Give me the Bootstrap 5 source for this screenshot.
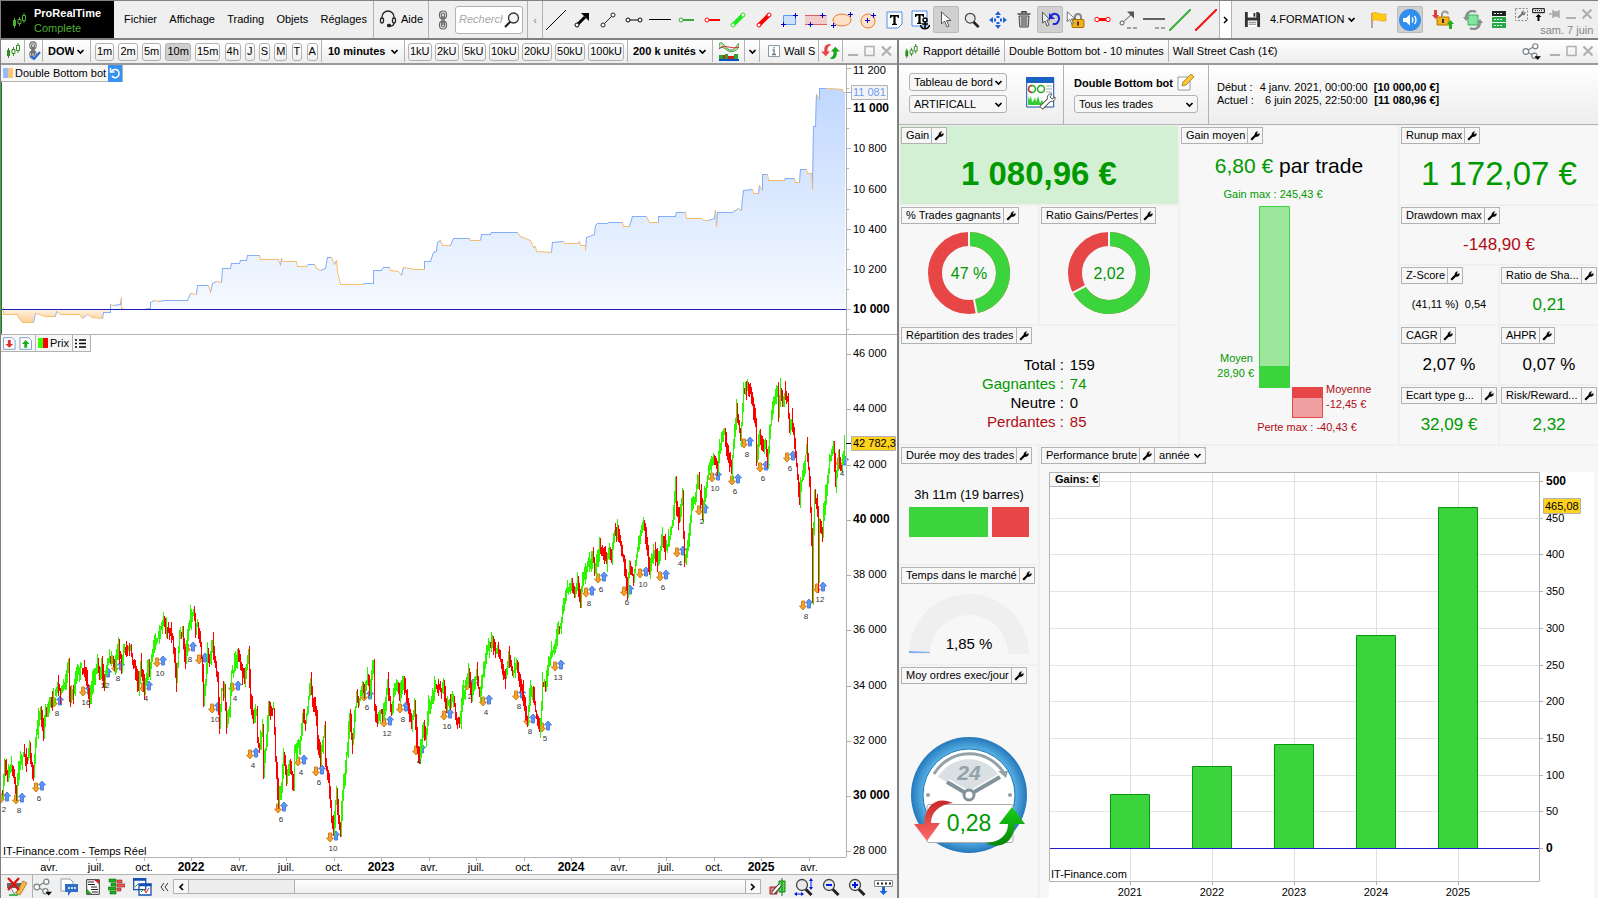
<!DOCTYPE html>
<html lang="fr">
<head>
<meta charset="utf-8">
<meta name="viewport" content="width=device-width, initial-scale=1">
<title>ProRealTime Complete</title>
<link href="https://cdn.jsdelivr.net/npm/bootstrap@5.3.0/dist/css/bootstrap.min.css" rel="stylesheet">
<style>
  :root { --edge:#808080; --line:#b2b2b2; --pos:#009900; --neg:#b00c14; --bar:#3cd43c; --loss:#e64646; }
  body { font-family:"Liberation Sans",Arial,sans-serif; font-size:11px; line-height:14px; color:#000; background:#f0f0f0; }
  svg { display:block; flex:none; }
  svg text { font-family:"Liberation Sans",Arial,sans-serif; font-size:11px; }
  button { border:0; padding:0; background:none; color:inherit; }
  a { color:inherit; text-decoration:none; }
  .topbar { height:40px; border-top:1px solid var(--edge); border-left:1px solid var(--edge); border-bottom:2px solid var(--edge); background:#efefef; }
  .brand-box { width:113px; background:#000; color:#fff; padding:2px 0 0 11px; gap:8px; }
  .brand-box small { color:#4fae32; font-size:11px; }
  .seg { border-right:1px solid var(--line); }
  .menu-seg { width:260px; padding:0 6px 2px 10px; }
  .w15 { width:15px; } .w12 { width:12px; } .w18 { width:18px; } .w24 { width:24px; } .w32 { width:32px; } .w48 { width:48px; }
  .help-seg { width:55px; padding-bottom:2px; } .search-seg { width:99px; }
  .search-box { width:68px; height:28px; border:1px solid var(--line); border-radius:3px; padding:0 19px 2px 3px; font-size:11px; font-style:italic; background:#fff; }
  .search-box::placeholder { color:#a8a8a8; opacity:1; }
  .search-ico { position:absolute; right:3px; top:6px; }
  .tool { width:26px; height:27px; display:flex; align-items:center; justify-content:center; flex:none; }
  .tool.active { background:#d0d0d0; border:1px solid #bbb; border-radius:2px; }
  .muted { color:#858585; }
  .sys { padding-top:4px; }
  .work { display:grid; grid-template-columns:minmax(0,899fr) minmax(0,699fr); }
  .pane-left { border-left:1px solid var(--edge); border-right:2px solid var(--edge); background:#fff; }
  .titlebar { height:25px; padding-bottom:1px; border-bottom:2px solid #999; background:linear-gradient(#fff,#ededed); }
  .tf { height:18px; border:1px solid var(--line); border-radius:3px; padding:0 1px 1px; background:linear-gradient(#fff,#efefef); line-height:14px; }
  .tf.active { background:#cfcfcf; }
  .tf-seg { width:231px; padding:1px 3px 0 4px; } .unit-seg { width:223px; padding:1px 3px 0; }
  .form-select.pick { font-size:11px; line-height:14px; color:#000; padding:0 12px 1px 4px; height:18px; border:1px solid var(--line); border-radius:3px; background-color:#f7f7f7; background-size:9px 9px; background-position:right 3px center;
    background-image:url("data:image/svg+xml,%3csvg xmlns='http://www.w3.org/2000/svg' viewBox='0 0 9 9'%3e%3cpath d='M1.5 3l3 3 3-3' fill='none' stroke='%23000' stroke-width='1.7'/%3e%3c/svg%3e"); }
  .form-select.plain { border:0; background-color:transparent; padding-left:5px; padding-right:16px; background-position:right 5px center; }
  .form-select.roomy { padding-left:6px; padding-right:18px; }
  .form-select.strong { font-weight:700; }
  .tag { height:17px; border:1px solid var(--line); border-top:0; border-left:0; background:#f7f7f7; padding:0 4px 0 2px; gap:3px; }
  .tag.tight { padding-right:3px; gap:2px; }
  .chart-tag { position:absolute; left:0; top:0; z-index:1; }
  .sw { display:inline-block; width:10px; height:10px; }
  .sw-bot { background:linear-gradient(90deg,#96b9ff 50%,#fcc478 50%); }
  .sw-price { background:linear-gradient(90deg,#3bff00 50%,#f00 50%); }
  .reset { width:14px; height:17px; background:#3592f0; margin-right:-3px; display:grid; place-items:center; }
  .equity { flex:270 1 0; min-height:0; border-bottom:1px solid var(--line); }
  .price { flex:540 1 0; min-height:0; border-bottom:1px solid var(--line); }
  .fill-svg { position:absolute; inset:0; width:100%; height:100%; }
  .foot { height:23px; background:#f0f0f0; }
  .scrollbar-x { height:15px; border:1px solid var(--line); background:#ededed; }
  .scrollbar-x button { width:15px; border-right:1px solid var(--line); background:#f8f8f8; }
  .scrollbar-x button:last-child { border-right:0; border-left:1px solid var(--line); }
  .track { width:18%; } .thumb { border-left:1px solid var(--line); background:linear-gradient(#fff,#eee); }
  .report-head { height:60px; padding-bottom:0; border-bottom:1px solid var(--line); background:linear-gradient(#fff,#ededed); }
  .head-a { width:165px; padding:0 7px 3px 10px; } .head-b { width:145px; padding:0 10px 2px; }
  .head-a .pick { width:98px; }
  .stack4 { gap:4px; }
  .dates { margin-bottom:2px; }
  .dates td { padding:0; line-height:13px; } .dates td + td { padding-left:6px; }
  .tiles { padding:1px 0 0 1px; display:grid; gap:2px; grid-template-columns:minmax(0,138fr) minmax(0,138fr) minmax(0,218fr) minmax(0,98fr) minmax(0,98fr); grid-template-rows:78px 58px 58px 58px 58px 118px 98px minmax(0,1fr); }
  .tile { background:#f7f7f7; display:flex; flex-direction:column; padding:1px; min-width:0; min-height:0; }
  .tile.good { background:#d4f0d4; }
  .tile-head { display:flex; align-self:flex-start; height:17px; border:1px solid var(--line); background:#f7f7f7; line-height:15px; max-width:100%; white-space:nowrap; }
  .tile-head > span { padding:0 2px 0 4px; }
  .tile-head button { width:15px; border-left:1px solid var(--line); display:grid; place-items:center; flex:none; }
  .tile-head .pick { width:52px; height:17px; margin:-1px -1px -1px 0; border-radius:0 3px 3px 0; }
  .tile-body { flex:1; display:flex; flex-direction:column; align-items:center; justify-content:center; min-height:0; }
  .c2 { grid-column:span 2; } .r2 { grid-row:span 2; } .r5 { grid-row:span 5; } .perf { grid-column:2 / span 4; grid-row:6 / span 3; }
  .pos { color:var(--pos); } .neg { color:var(--neg); }
  .fs-xl { font-size:33px; line-height:36px; } .fs-lg { font-size:21px; line-height:24px; } .fs-md { font-size:17px; line-height:20px; } .fs-md.tile-body { padding-top:2px; } .fs-sm2 { font-size:13px; line-height:16px; }
  .split { width:100%; font-size:15px; line-height:19px; margin-bottom:2px; } .split th { width:59%; font-weight:400; text-align:right; padding:0; } .split td { padding:0 0 0 6px; }
  .donut { margin-bottom:2px; }
  .dur { width:120px; height:30px; gap:4px; } .dur .win { background:var(--bar); width:79px; } .dur .lose { background:var(--loss); flex:1; }
  .perf-plot { flex:1; margin:8px 3px -1px 8px; position:relative; background:#fff; min-height:0; }
</style>
</head>
<body class="vh-100 d-flex flex-column overflow-hidden">

<svg width="0" height="0" class="position-absolute" aria-hidden="true">
  <symbol id="candles" viewBox="0 0 14 16"><path d="M2.500 5v10M7.500 4v9M12 0v10" stroke="#2e8b1d"/><path d="M1 7h3v6H1z" fill="#2e8b1d"/><path d="M6 6.500h3v4H6zM10.500 2.500h3v5h-3z" fill="#fff" stroke="#2e8b1d"/></symbol>
  <symbol id="wrench" viewBox="0 0 10 10"><path d="M1.200 8.800L6 4" stroke="#000" stroke-width="2.200"/><path d="M5.600 5.200C4.200 3 5.400.700 7.700.700L6.600 2.200l1 1.200L9.300 2.500c.4 2-1.500 3.900-3.700 2.700z" fill="#000" stroke="#000" stroke-width=".5"/></symbol>
  <symbol id="chain" viewBox="0 0 12 20"><g fill="none" stroke="#666" stroke-width="1.200"><rect x="2.500" y="1" width="7" height="8" rx="3.500"/><rect x="4.500" y="3" width="3" height="5" rx="1.500"/><rect x="2.500" y="11" width="7" height="8" rx="3.500"/><rect x="4.500" y="12" width="3" height="5" rx="1.500"/><path d="M5 6v9M7 6v9"/></g></symbol>
  <symbol id="share" viewBox="0 0 20 18"><g fill="#fff" stroke="#7d8488" stroke-width="1.300"><path d="M4 9l10-6M4 9l10 5"/><circle cx="4" cy="9" r="3"/><circle cx="14" cy="3.500" r="2.700"/><circle cx="13" cy="13.500" r="2.700"/></g><path d="M13 14h7l-3.500 4z" fill="#000"/></symbol>
  <symbol id="lens" viewBox="0 0 18 18"><path d="M10.500 11l6 6" stroke="#222" stroke-width="3"/><circle cx="7" cy="7" r="5.500" fill="#e8e8e8" stroke="#444" stroke-width="1.300"/></symbol>
  <symbol id="win-min" viewBox="0 0 12 12"><path d="M1 10h10" stroke="#b0b0b0" stroke-width="2"/></symbol>
  <symbol id="win-max" viewBox="0 0 12 12"><path d="M1.500 1.500h9v9h-9z" fill="none" stroke="#b0b0b0" stroke-width="1.500"/></symbol>
  <symbol id="win-x" viewBox="0 0 12 12"><path d="M1.500 1.500l9 9M10.500 1.500l-9 9" stroke="#b0b0b0" stroke-width="2.200"/></symbol>
  <symbol id="swap" viewBox="0 0 20 18"><path d="M9 1C4 1 3 5 3.500 9H0l5 5 4.500-5H7C6.500 6 7 3 11 2z" fill="#e64646"/><path d="M11 17c5 0 6-4 5.500-8H20l-5-5-4.500 5H13c.5 3 0 6-4 7z" fill="#18a818"/></symbol>
  <symbol id="cursor" viewBox="0 0 12 17"><path d="M1.500 1v12l3-3 2.500 6 2-1-2.500-5.500H11z" fill="#fff" stroke="#555"/></symbol>
  <symbol id="lock" viewBox="0 0 14 15"><path d="M4 7V4a3 3 0 016 0v3" fill="none" stroke="#888" stroke-width="2"/><rect x="1" y="6.500" width="12" height="8" rx="1" fill="#f2b01e" stroke="#a87400"/><path d="M7 8.500v4" stroke="#333" stroke-width="1.800"/></symbol>
</svg>

<header class="topbar d-flex flex-shrink-0">
  <div class="brand-box d-flex align-items-center">
    <svg width="14" height="16" viewBox="0 0 14 16"><path d="M2.500 5v10M7.500 4v9M12 0v10" stroke="#4fae32"/><path d="M1 7h3v6H1z" fill="#4fae32"/><path d="M6 6.500h3v4H6zM10.500 2.500h3v5h-3z" stroke="#4fae32"/></svg>
    <div class="lh-1"><strong class="d-block pb-1">ProRealTime</strong><small class="d-block">Complete</small></div>
  </div>
  <nav class="seg menu-seg d-flex align-items-center justify-content-between" aria-label="Menu principal">
    <a href="#">Fichier</a><a href="#">Affichage</a><a href="#">Trading</a><a href="#">Objets</a><a href="#">Réglages</a>
  </nav>
  <button class="seg help-seg d-flex align-items-center justify-content-center gap-1">
    <svg width="18" height="18" viewBox="0 0 18 18" fill="none" stroke="#222" stroke-width="1.300"><path d="M3 8.500V7a6 6 0 0112 0v1.500M15 13c0 2-2 3-4 3"/><rect x="1.500" y="8" width="3" height="5" rx="1.400"/><rect x="13.500" y="8" width="3" height="5" rx="1.400"/><rect x="8.500" y="14.500" width="3" height="2" rx="1" fill="#222"/></svg>Aide</button>
  <div class="seg search-seg d-flex align-items-center justify-content-between px-1">
    <button class="ps-1" aria-label="Lier"><svg width="12" height="20"><use href="#chain"/></svg></button>
    <div class="position-relative"><input class="search-box" type="text" placeholder="Recherche" aria-label="Rechercher"><svg class="search-ico" width="16" height="16" viewBox="0 0 16 16"><path d="M6.500 9.500L1 15" stroke="#222" stroke-width="2.200"/><circle cx="9.500" cy="6" r="5" fill="#f4f4f4" stroke="#333" stroke-width="1.300"/></svg></div>
  </div>
  <button class="seg w15 muted" aria-label="Précédent">‹</button>
  <div class="d-flex align-items-center seg" role="toolbar" aria-label="Outils de dessin">
    <button class="tool" aria-label="Ligne"><svg width="22" height="22"><path d="M1 21L21 1" stroke="#000"/></svg></button>
    <button class="tool" aria-label="Flèche"><svg width="16" height="16"><path d="M4 12l7-7" stroke="#000" stroke-width="3"/><path d="M7 1h8v8z"/><circle cx="3" cy="13" r="2" fill="#fff" stroke="#000"/></svg></button>
    <button class="tool" aria-label="Segment"><svg width="16" height="16" fill="#fff" stroke="#222"><path d="M3 13L13 3"/><circle cx="3" cy="13" r="2"/><circle cx="13" cy="3" r="2"/></svg></button>
    <button class="tool" aria-label="Segment horizontal"><svg width="18" height="6" fill="#fff" stroke="#000"><path d="M3 3h12"/><circle cx="3" cy="3" r="2"/><circle cx="15" cy="3" r="2"/></svg></button>
    <button class="tool" aria-label="Horizontale"><svg width="22" height="3"><path d="M0 1.500h22" stroke="#000"/></svg></button>
    <button class="tool" aria-label="Support"><svg width="16" height="6"><path d="M5 3h11" stroke="#38a838" stroke-width="2"/><circle cx="3" cy="3" r="2" fill="#fff" stroke="#38a838"/></svg></button>
    <button class="tool" aria-label="Résistance"><svg width="16" height="6"><path d="M5 3h11" stroke="#f00" stroke-width="2"/><circle cx="3" cy="3" r="2" fill="#fff" stroke="#f00"/></svg></button>
    <button class="tool" aria-label="Segment vert"><svg width="16" height="16" fill="#fff" stroke="#1de81d"><path d="M3 13L13 3" stroke-width="4"/><circle cx="3" cy="13" r="2"/><circle cx="13" cy="3" r="2"/></svg></button>
    <button class="tool" aria-label="Segment rouge"><svg width="16" height="16" fill="#fff" stroke="#f00"><path d="M3 13L13 3" stroke-width="4"/><circle cx="3" cy="13" r="2"/><circle cx="13" cy="3" r="2"/></svg></button>
    <button class="tool" aria-label="Rectangle"><svg width="18" height="16"><path d="M2.500 3.500h12v9h-12z" fill="#cfe2fb" stroke="#5a98f0"/><path d="M0 12.500h5M2.500 10v5M12 3.500h5M14.500 1v5" stroke="#00c"/></svg></button>
    <button class="tool" aria-label="Zone"><svg width="22" height="14"><path d="M0 2.500h22v9H0z" fill="#f3cccc"/><path d="M0 2.500h22M0 11.500h22" stroke="#d86060"/><path d="M3 11.500h5M5.500 9v5M15 2.500h5M17.500 0v5" stroke="#00c"/></svg></button>
    <button class="tool" aria-label="Ellipse"><svg width="22" height="16"><ellipse cx="11" cy="8" rx="9" ry="6" fill="#fde0c8" stroke="#f07830"/><path d="M0 13.500h5M2.500 11v5M17 2.500h5M19.500 0v5" stroke="#00c"/></svg></button>
    <button class="tool" aria-label="Cercle"><svg width="18" height="18"><circle cx="9" cy="10" r="7" fill="#fde0c8" stroke="#f07830"/><path d="M6 9.500h5M8.500 7v5M12 4.500h5M14.500 2v5" stroke="#00c"/></svg></button>
    <button class="tool" aria-label="Texte"><svg width="17" height="18" viewBox="0 0 17 18"><path d="M1 1h15v12l-4 4H1z" fill="#fff" stroke="#4a8ff0"/><path d="M4 4h9v3h-1l-1-1.500H9.600v7l1.400.5v1H6v-1l1.400-.5v-7H6L5 7H4z"/></svg></button>
    <button class="tool" aria-label="Texte ancré"><svg width="19" height="20" viewBox="0 0 19 20"><path d="M1 1h15v15H1z" fill="#fff" stroke="#4a8ff0"/><path d="M4 4h9v3h-1l-1-1.500H9.600v7l1 .5v1H6v-1l1.400-.5v-7H6L5 7H4z"/><g fill="none" stroke="#000" stroke-width="1.500"><circle cx="14" cy="10" r="2"/><path d="M14 11v8M9.500 15c1 5 8 5 9 0M11 14h6"/></g></svg></button>
    <button class="tool active" aria-label="Curseur"><svg width="12" height="17"><use href="#cursor"/></svg></button>
    <button class="tool" aria-label="Loupe"><svg width="16" height="16"><use href="#lens"/></svg></button>
    <button class="tool" aria-label="Déplacer"><svg width="18" height="18" viewBox="0 0 18 18"><path d="M9 0l3 4H6zM9 18l3-4H6zM0 9l4-3v6zM18 9l-4-3v6zM7.500 5h3v2h-3zM7.500 11h3v2h-3zM5 7.500h2v3H5zM11 7.500h2v3h-2z" fill="#1c63d8"/></svg></button>
    <button class="tool" aria-label="Supprimer"><svg width="14" height="17" viewBox="0 0 14 17" fill="none" stroke="#444"><path d="M5 2V.7h4V2M.5 3h13" stroke-width="1.600"/><path d="M2 5l.8 11h8.400L12 5z" fill="#ccc"/><path d="M5 6v9M7 6v9M9 6v9"/></svg></button>
    <button class="tool active" aria-label="Retour au curseur"><svg width="19" height="17" viewBox="0 0 19 17"><path d="M1.500 1v11l2.500-2 2 5 2-1-2-5H9z" fill="#eee" stroke="#555"/><path d="M10 4.500c4-4 9-.5 7.800 4.500-.8 3-3 4.500-6 4" fill="none" stroke="#1726d8" stroke-width="2"/><path d="M8 2v6h6z" fill="#1726d8"/></svg></button>
    <button class="tool" aria-label="Verrouiller"><svg width="20" height="18"><use href="#lock" x="5" y="2" width="14" height="15"/><use href="#cursor" width="10" height="14"/></svg></button>
    <button class="tool" aria-label="Segment rouge horizontal"><svg width="17" height="7" fill="#fff" stroke="#f00"><path d="M4 3.500h9" stroke-width="3"/><circle cx="3" cy="3.500" r="2.200"/><circle cx="14" cy="3.500" r="2.200"/></svg></button>
    <button class="tool" aria-label="Extension"><svg width="18" height="19" viewBox="0 0 18 19"><path d="M3 13L13 4" stroke="#555"/><path d="M8 1.500h7v7z" fill="#555"/><circle cx="3" cy="13" r="2" fill="#fff" stroke="#555"/><path d="M8 18h4M14 18h4" stroke="#555"/></svg></button>
    <button class="tool" aria-label="Ligne grise"><svg width="22" height="19"><path d="M0 9h22" stroke="#333" stroke-width="1.500"/><path d="M12 18h4M18 18h4" stroke="#555"/></svg></button>
    <button class="tool" aria-label="Ligne verte"><svg width="22" height="22"><path d="M0 22L22 0" stroke="#38b038" stroke-width="2"/></svg></button>
    <button class="tool" aria-label="Ligne rouge"><svg width="22" height="22"><path d="M0 22L22 0" stroke="#f01010" stroke-width="2"/></svg></button>
  </div>
  <button class="seg bg-white w12 d-grid align-items-center justify-content-center" aria-label="Suivant"><svg width="6" height="8"><path d="M1 1l3 3-3 3" fill="none" stroke="#000" stroke-width="1.500"/></svg></button>
  <button class="ms-2 ps-1" aria-label="Enregistrer"><svg width="17" height="17" viewBox="0 0 18 18"><path d="M1 1h14l2 2v14H1z" fill="#333"/><path d="M4 1h9v6H4zM4 10h10v7H4z" fill="#fff"/><path d="M10 2h2v4h-2z" fill="#333"/><path d="M5 12h8M5 14h8" stroke="#777"/></svg></button>
  <select class="form-select pick plain align-self-center ms-1 w-auto" aria-label="Espace de travail"><option>4.FORMATION</option></select>
  <div class="d-flex align-items-center flex-grow-1 justify-content-around ps-1">
    <button aria-label="Drapeau"><svg width="18" height="18" viewBox="0 0 18 18"><path d="M2 2v15" stroke="#a88" stroke-width="1.500"/><path d="M2 2c4-2 6 2 14 1v7c-8 1-9-3-14 0z" fill="#ffc918" stroke="#e0a000" stroke-width=".6"/></svg></button>
    <button class="tool active" aria-label="Son"><svg width="22" height="22" viewBox="0 0 22 22"><circle cx="11" cy="11" r="11" fill="#2f8eee"/><path d="M4 9h3l4-3.500v11L7 13H4z" fill="#fff"/><path d="M13 8.500q2 2.500 0 5M15.500 7q3 4 0 8" stroke="#fff" fill="none" stroke-width="1.300"/></svg></button>
    <button aria-label="Verrou"><svg width="22" height="19" viewBox="0 0 22 19"><path d="M10 8V5a3 3 0 016-1" stroke="#999" stroke-width="2" fill="none"/><path d="M5 7h12v8H5z" fill="#f2b01e" stroke="#b07c00"/><path d="M11 9v4" stroke="#333" stroke-width="2"/><path d="M2 0h3v5h2L3.500 9 0 5h2z" fill="#e03c3c"/><path d="M17 19h3v-5h2l-3.500-4L15 14h2z" fill="#1fae1f"/></svg></button>
    <button aria-label="Rafraîchir"><svg width="20" height="20" viewBox="0 0 20 20"><path d="M5 5h10v10H5z" fill="#82e6a0" stroke="#3ab060"/><path d="M13 2C8-1 3 3 3 8M7 18c5 3 10-1 10-6" fill="none" stroke="#8a8f8f" stroke-width="2.500"/><path d="M0 7h6.500L3 11zM13.500 13H20l-3-4z" fill="#8a8f8f"/></svg></button>
    <button aria-label="Serveur"><svg width="14" height="17" viewBox="0 0 14 17"><path d="M0 0h14v5H0z" fill="#222"/><path d="M0 6h14v5H0zM0 12h14v5H0z" fill="#28a745"/><path d="M2 2.500h8M2 8.500h8M2 14.500h8" stroke="#cfe" stroke-dasharray="2 1"/></svg></button>
    <div class="sys d-flex flex-column align-items-end gap-1">
      <div class="d-flex gap-1">
        <svg width="13" height="13" viewBox="0 0 13 13"><path d="M.5.500h12v12H.5z" fill="none" stroke="#888" stroke-dasharray="2 1.500"/><use href="#wrench" x="2" y="2" width="9" height="9" opacity=".5"/></svg>
        <svg width="13" height="13" viewBox="0 0 13 13"><path d="M.7.700h11.600v4H.7z" fill="none" stroke="#000"/><path d="M3 2.700h7" stroke="#000" stroke-dasharray="1"/><path d="M6.500 6l3 3h-2v4h-2V9h-2z"/></svg>
        <svg width="12" height="12" viewBox="0 0 12 12"><path d="M0 6h4M4 2v8M5 4h4v4H5zM10 2v8" stroke="#aaa" fill="#aaa" stroke-width="1.500"/></svg>
        <svg width="12" height="12"><use href="#win-min"/></svg><svg width="12" height="12"><use href="#win-x"/></svg>
      </div>
      <span class="muted lh-1">sam. 7 juin</span>
    </div>
  </div>
</header>

<main class="work flex-grow-1 overflow-hidden">
  <section class="pane-left d-flex flex-column" aria-label="Graphique DOW">
    <div class="titlebar d-flex flex-shrink-0">
      <div class="seg w24 d-grid align-items-center justify-content-center"><svg width="14" height="16"><use href="#candles"/></svg></div>
      <button class="seg w18 d-grid align-items-center justify-content-center" aria-label="Lier"><svg width="14" height="20"><use href="#chain" width="12" height="18"/><path d="M4 15l3 3 6-7" fill="none" stroke="#2166d8" stroke-width="2"/></svg></button>
      <div class="seg w48 d-flex align-items-center"><select class="form-select pick plain strong" aria-label="Instrument"><option>DOW</option></select></div>
      <div class="seg tf-seg d-flex align-items-center justify-content-between">
        <button class="tf">1m</button><button class="tf">2m</button><button class="tf">5m</button><button class="tf active">10m</button><button class="tf">15m</button><button class="tf">4h</button><button class="tf">J</button><button class="tf">S</button><button class="tf">M</button><button class="tf">T</button><button class="tf">A</button>
      </div>
      <div class="seg d-flex align-items-center"><select class="form-select pick plain roomy strong" aria-label="Unité de temps"><option>10 minutes</option></select></div>
      <div class="seg unit-seg d-flex align-items-center justify-content-between">
        <button class="tf">1kU</button><button class="tf">2kU</button><button class="tf">5kU</button><button class="tf">10kU</button><button class="tf">20kU</button><button class="tf">50kU</button><button class="tf">100kU</button>
      </div>
      <div class="seg d-flex align-items-center"><select class="form-select pick plain strong" aria-label="Profondeur"><option>200 k unités</option></select></div>
      <button class="seg w32 d-grid align-items-center justify-content-center" aria-label="Indicateurs"><svg width="20" height="20" viewBox="0 0 20 20"><path d="M0 3c4-5 7 7 12 6 4 0 5-4 8-7v4c-3 5-9 6-12 3-3-2-5-4-8-1z" fill="#bfe8bf" stroke="#3a9c3a"/><path d="M0 8c5-6 12 1 20-2" fill="none" stroke="#d03030"/><path d="M0 14h4v4H0zM6 13h3v5H6zM15 13h4v5h-4z" fill="#22a822"/><path d="M4 14h2v4H4zM9 15h6v3H9z" fill="#d02020"/><path d="M0 19h20" stroke="#0050d0" stroke-width="2"/></svg></button>
      <button class="seg w15 d-grid align-items-center justify-content-center" aria-label="Plus d'indicateurs"><svg width="9" height="9"><path d="M1.500 3l3 3 3-3" fill="none" stroke="#000" stroke-width="1.700"/></svg></button>
      <div class="seg d-flex align-items-center flex-grow-1 text-nowrap gap-1 ps-2">
        <svg width="12" height="12" viewBox="0 0 12 12"><path d="M.5.500h11v11H.5z" fill="#fff" stroke="#8a9aa4"/><path d="M6 2v1.500M4.500 5H6v4.500M4 9.500h4" stroke="#68808c" stroke-width="1.300" fill="none"/></svg><span>Wall S</span></div>
      <button class="seg w24 d-grid align-items-center justify-content-center" aria-label="Actualiser"><svg width="19" height="17"><use href="#swap"/></svg></button>
      <div class="d-flex align-items-center gap-1 px-1 flex-shrink-0"><svg width="12" height="12"><use href="#win-min"/></svg><svg width="13" height="12"><use href="#win-max"/></svg><svg width="13" height="12"><use href="#win-x"/></svg></div>
    </div>

    <div class="equity position-relative">
      <div class="tag tight chart-tag d-flex align-items-center text-nowrap"><span class="sw sw-bot"></span>Double Bottom bot<button class="reset" aria-label="Relancer"><svg width="12" height="12" fill="none" stroke="#fff" stroke-width="1.500"><path d="M2 5c2-4 8-3 8 1.500S5 12 3 9"/><path d="M1.500 1v4h4"/></svg></button></div>
      <svg class="fill-svg" id="equity" role="img" aria-label="Courbe de capital"></svg>
    </div>
    <div class="price position-relative">
      <div class="chart-tag d-flex">
        <div class="tag tight d-flex align-items-center"><svg width="29" height="13" viewBox="0 0 30 13"><path d="M.5.500h9l3 3v9H.5zM17.500.500h9l3 3v9h-12z" fill="#fff" stroke="#7aa0c0"/><path d="M5 3h3v4h2.500l-4 4-4-4H5z" fill="#e03030"/><path d="M22 11h3V7h2.500l-4-4-4 4H22z" fill="#20a820"/></svg></div>
        <div class="tag tight d-flex align-items-center"><span class="sw sw-price"></span>Prix</div>
        <button class="tag d-flex align-items-center" aria-label="Liste"><svg width="11" height="9"><path d="M0 1h2M0 4.500h2M0 8h2M4 1h7M4 4.500h7M4 8h7" stroke="#000" stroke-width="1.400"/></svg></button>
      </div>
      <svg class="fill-svg" id="price" role="img" aria-label="Cours du DOW"></svg>
    </div>

    <div class="foot d-flex align-items-center flex-shrink-0">
      <button class="seg w32 h-100 d-grid align-items-center justify-content-center" aria-label="Masquer"><svg width="22" height="20" viewBox="0 0 22 20"><path d="M1 6h14v5H1z" fill="#666"/><path d="M5 11l3 6 6-6" fill="none" stroke="#888"/><path d="M10 16l7-12 4 2-7 12z" fill="#f5b944" stroke="#97681a" stroke-width=".7"/><path d="M2 1l11 12M13 1L2 13" stroke="#e01010" stroke-width="2.300"/><path d="M3 18h9" stroke="#18a018" stroke-width="1.500"/></svg></button>
      <div class="d-flex align-items-center gap-2">
        <button aria-label="Partager"><svg width="19" height="18"><use href="#share"/></svg></button>
        <button aria-label="Commentaires"><svg width="18" height="18" viewBox="0 0 18 18"><path d="M1 1h9l3 3v9H1z" fill="#fff" stroke="#8aa0b0"/><path d="M5 6h13v8h-7l-3 4v-4H5z" fill="#2f6fc8"/><path d="M8 10h8" stroke="#fff" stroke-width="1.700" stroke-dasharray="2 1"/></svg></button>
        <button aria-label="Rapport"><svg width="14" height="16" viewBox="0 0 14 16"><path d="M.7.700h12.600v14.600H.7z" fill="#fff" stroke="#333"/><path d="M2 3h6M2 5.500h7M5 8h6M5 10.500h7M6 13h6" stroke="#222"/><path d="M8 1h5v4z" fill="#d02020"/><path d="M1 10v5h5z" fill="#20a820"/></svg></button>
        <button aria-label="Carnet d'ordres"><svg width="17" height="17" viewBox="0 0 17 17"><path d="M1 1h7v3H1zM3 5h5v3H3zM0 9h8v3H0zM2 13h6v3H2z" fill="#1fae1f" stroke="#0b700b" stroke-width=".6"/><path d="M9 2h5v3H9zM9 6h8v3H9zM9 10h4v3H9z" fill="#e85858" stroke="#a02020" stroke-width=".6"/></svg></button>
        <button aria-label="Graphiques liés"><svg width="19" height="18" viewBox="0 0 19 18"><path d="M.7.700h12v11H.7zM6 6h12v11H6z" fill="#fff" stroke="#1450b4" stroke-width="1.300"/><path d="M0 1.500h13M6 7h12.500" stroke="#1450b4" stroke-width="2.500"/><path d="M2 9l3-3M8 14l3-3" stroke="#18a018"/><path d="M11 11l2 4 3-5" fill="none" stroke="#e02020"/></svg></button>
        <button aria-label="Réduire"><svg width="9" height="10" fill="none" stroke="#333"><path d="M4 1L1 5l3 4M8 1L5 5l3 4"/></svg></button>
      </div>
      <div class="scrollbar-x d-flex flex-grow-1 mx-1">
        <button class="d-grid align-items-center justify-content-center" aria-label="Défiler à gauche"><svg width="6" height="8"><path d="M5 1L2 4l3 3" fill="none" stroke="#000" stroke-width="1.700"/></svg></button>
        <div class="track"></div><div class="thumb flex-grow-1"></div>
        <button class="d-grid align-items-center justify-content-center" aria-label="Défiler à droite"><svg width="6" height="8"><path d="M1 1l3 3-3 3" fill="none" stroke="#000" stroke-width="1.700"/></svg></button>
      </div>
      <div class="d-flex align-items-center gap-2 ps-1">
        <button aria-label="Style du graphique"><svg width="17" height="18" viewBox="0 0 17 18"><path d="M1 9h7v7H1z" fill="#e88080" stroke="#a02020"/><path d="M10 3h6v11h-6zM13 0v18" fill="#5ada5a" stroke="#108010"/><path d="M4 15l7-8" stroke="#222" stroke-width="4"/><path d="M4 15l7-8" stroke="#fff" stroke-width="2.400"/></svg></button>
        <button aria-label="Zoom auto"><svg width="20" height="18" viewBox="0 0 20 18"><use href="#lens" x="1" width="18" height="18"/><path d="M1 16h8M17 1v10" stroke="#0018e0"/><path d="M0 16l3-2v4zM10 16l-3-2v4zM17 0l2 3h-4zM17 12l2-3h-4z" fill="#0018e0"/></svg></button>
        <button aria-label="Zoom arrière"><svg width="18" height="18"><use href="#lens"/><path d="M4 7h6" stroke="#0018e0" stroke-width="2"/></svg></button>
        <button aria-label="Zoom avant"><svg width="18" height="18"><use href="#lens"/><path d="M4 7h6M7 4v6" stroke="#0018e0" stroke-width="2"/></svg></button>
        <button class="pe-1" aria-label="Barre"><svg width="19" height="16" viewBox="0 0 19 16"><path d="M.5 1.500h18v6H.5z" fill="#fff" stroke="#888"/><path d="M3 4.500h14" stroke="#222" stroke-width="2" stroke-dasharray="2 2"/><path d="M8 8h3v4h2.500l-4 4-4-4H8z" fill="#1c63d8"/></svg></button>
      </div>
    </div>
  </section>

  <section class="d-flex flex-column" aria-label="Rapport détaillé">
    <div class="titlebar d-flex flex-shrink-0">
      <div class="seg d-flex align-items-center gap-1 px-1"><svg width="16" height="15"><use href="#candles"/></svg><span>Rapport détaillé</span></div>
      <div class="seg d-flex align-items-center px-1">Double Bottom bot - 10 minutes</div>
      <div class="d-flex align-items-center px-1">Wall Street Cash (1€)</div>
      <div class="ms-auto d-flex align-items-center gap-1 px-1"><button class="me-1" aria-label="Partager"><svg width="19" height="17"><use href="#share"/></svg></button><svg width="12" height="12"><use href="#win-min"/></svg><svg width="13" height="12"><use href="#win-max"/></svg><svg width="12" height="12"><use href="#win-x"/></svg></div>
    </div>
    <div class="report-head d-flex flex-shrink-0">
      <div class="seg head-a d-flex align-items-center justify-content-between">
        <div class="d-flex flex-column stack4"><select class="form-select pick" aria-label="Vue"><option>Tableau de bord</option></select><select class="form-select pick" aria-label="Modèle"><option>ARTIFICALL</option></select></div>
        <button aria-label="Configurer"><svg width="30" height="33" viewBox="0 0 30 33"><path d="M.7 1h27v29H.7z" fill="#fff" stroke="#1450a8"/><path d="M0 0h28v6H0z" fill="#1a62c4"/><circle cx="6" cy="12" r="3.500" fill="none" stroke="#2a2" stroke-width="1.500"/><path d="M6 8.500A3.500 3.500 0 006 15.500" fill="none" stroke="#d33" stroke-width="1.500"/><circle cx="15" cy="12" r="3.500" fill="none" stroke="#2a2" stroke-width="1.500"/><path d="M20 9h6M20 12h6M20 15h6" stroke="#aaa"/><path d="M2 28V18l1 5 2-4 1 6 2-2 1-3 1 5 2-6 2 7 2-3 2 4 2-3 2 4v0z" fill="#3c3"/><path d="M15 31l9-9" stroke="#555" stroke-width="5"/><path d="M22 23c-2-4 1-7 4-6l-2 3 2 2 3-2c1 4-4 6-7 3z" fill="#fff" stroke="#555"/><path d="M15.500 30.500l9-9" stroke="#fff" stroke-width="3"/></svg></button>
      </div>
      <div class="seg head-b d-flex flex-column justify-content-center gap-1">
        <div class="d-flex align-items-center justify-content-between"><strong>Double Bottom bot</strong><button class="pe-1 me-1 me-lg-0" aria-label="Modifier"><svg width="17" height="17" viewBox="0 0 17 17"><path d="M1 3h12v13H1z" fill="#fff" stroke="#8aa0ac"/><path d="M5 12l1-4 8-8 3 3-8 8z" fill="#f8c838" stroke="#a07818" stroke-width=".8"/></svg></button></div>
        <select class="form-select pick" aria-label="Filtre des trades"><option>Tous les trades</option></select>
      </div>
      <table class="dates ms-2 align-self-center text-end text-nowrap"><tbody>
        <tr><td class="text-start">Début :</td><td>4 janv. 2021, 00:00:00</td><td><strong>[10 000,00 €]</strong></td></tr>
        <tr><td class="text-start">Actuel :</td><td>6 juin 2025, 22:50:00</td><td><strong>[11 080,96 €]</strong></td></tr>
      </tbody></table>
    </div>

    <div class="tiles flex-grow-1">
      <article class="tile good c2"><div class="tile-head"><span>Gain</span><button aria-label="Régler Gain"><svg width="10" height="10"><use href="#wrench"/></svg></button></div><div class="tile-body fs-xl fw-bold pos">1 080,96 €</div></article>
      <article class="tile r5"><div class="tile-head"><span>Gain moyen</span><button aria-label="Régler Gain moyen"><svg width="10" height="10"><use href="#wrench"/></svg></button></div>
        <div class="tile-body"><div class="fs-lg"><span class="pos">6,80 €</span> par trade</div>
          <svg width="216" height="252" viewBox="0 0 216 252" class="mt-1">
            <text x="92" y="16" text-anchor="middle" fill="#009900">Gain max : 245,43 €</text>
            <path d="M78.500 24.500h30v181h-30z" fill="#9be69b" stroke="#3cd43c"/><path d="M78 184h31v22H78z" fill="#3cd43c"/>
            <path d="M111.500 205.500h30v30h-30z" fill="#f0a0a0" stroke="#e64646"/><path d="M111 205h31v11h-31z" fill="#e64646"/>
            <text x="72" y="180" text-anchor="end" fill="#009900">Moyen</text><text x="73" y="195" text-anchor="end" fill="#009900">28,90 €</text>
            <text x="145" y="211" fill="#b00c14">Moyenne</text><text x="145" y="226" fill="#b00c14">-12,45 €</text><text x="126" y="249" text-anchor="middle" fill="#b00c14">Perte max : -40,43 €</text>
          </svg></div></article>
      <article class="tile c2"><div class="tile-head"><span>Runup max</span><button aria-label="Régler Runup max"><svg width="10" height="10"><use href="#wrench"/></svg></button></div><div class="tile-body fs-xl pos">1 172,07 €</div></article>
      <article class="tile r2"><div class="tile-head"><span>% Trades gagnants</span><button aria-label="Régler % Trades gagnants"><svg width="10" height="10"><use href="#wrench"/></svg></button></div><div class="tile-body"><svg class="donut" data-share="0.47" data-label="47 %" width="84" height="84" viewBox="-42 -42 84 84"></svg></div></article>
      <article class="tile r2"><div class="tile-head"><span>Ratio Gains/Pertes</span><button aria-label="Régler Ratio Gains/Pertes"><svg width="10" height="10"><use href="#wrench"/></svg></button></div><div class="tile-body"><svg class="donut" data-share="0.67" data-label="2,02" width="84" height="84" viewBox="-42 -42 84 84"></svg></div></article>
      <article class="tile c2"><div class="tile-head"><span>Drawdown max</span><button aria-label="Régler Drawdown max"><svg width="10" height="10"><use href="#wrench"/></svg></button></div><div class="tile-body fs-md neg">-148,90 €</div></article>
      <article class="tile"><div class="tile-head"><span>Z-Score</span><button aria-label="Régler Z-Score"><svg width="10" height="10"><use href="#wrench"/></svg></button></div><div class="tile-body">(41,11 %)&nbsp; 0,54</div></article>
      <article class="tile"><div class="tile-head w-100"><span class="flex-grow-1">Ratio de Sha...</span><button aria-label="Régler Ratio de Sharpe"><svg width="10" height="10"><use href="#wrench"/></svg></button></div><div class="tile-body fs-md pos">0,21</div></article>
      <article class="tile c2 r2"><div class="tile-head"><span>Répartition des trades</span><button aria-label="Régler Répartition"><svg width="10" height="10"><use href="#wrench"/></svg></button></div>
        <div class="tile-body"><table class="split"><tbody><tr><th scope="row">Total :</th><td>159</td></tr><tr class="pos"><th scope="row">Gagnantes :</th><td>74</td></tr><tr><th scope="row">Neutre :</th><td>0</td></tr><tr class="neg"><th scope="row">Perdantes :</th><td>85</td></tr></tbody></table></div></article>
      <article class="tile"><div class="tile-head"><span>CAGR</span><button aria-label="Régler CAGR"><svg width="10" height="10"><use href="#wrench"/></svg></button></div><div class="tile-body fs-md">2,07 %</div></article>
      <article class="tile"><div class="tile-head"><span>AHPR</span><button aria-label="Régler AHPR"><svg width="10" height="10"><use href="#wrench"/></svg></button></div><div class="tile-body fs-md">0,07 %</div></article>
      <article class="tile"><div class="tile-head w-100"><span class="flex-grow-1">Ecart type g...</span><button aria-label="Régler Ecart type"><svg width="10" height="10"><use href="#wrench"/></svg></button></div><div class="tile-body fs-md pos">32,09 €</div></article>
      <article class="tile"><div class="tile-head w-100"><span class="flex-grow-1">Risk/Reward...</span><button aria-label="Régler Risk/Reward"><svg width="10" height="10"><use href="#wrench"/></svg></button></div><div class="tile-body fs-md pos">2,32</div></article>
      <article class="tile"><div class="tile-head"><span>Durée moy des trades</span><button aria-label="Régler Durée"><svg width="10" height="10"><use href="#wrench"/></svg></button></div><div class="tile-body gap-1 pb-1"><span class="fs-sm2">3h 11m (19 barres)</span><div class="dur d-flex"><div class="win"></div><div class="lose"></div></div></div></article>
      <article class="tile perf"><div class="tile-head"><span>Performance brute</span><button aria-label="Régler Performance"><svg width="10" height="10"><use href="#wrench"/></svg></button><select class="form-select pick" aria-label="Période"><option>année</option></select></div>
        <div class="perf-plot"><svg class="fill-svg" id="perf" role="img" aria-label="Gains par année"></svg></div></article>
      <article class="tile"><div class="tile-head"><span>Temps dans le marché</span><button aria-label="Régler Temps dans le marché"><svg width="10" height="10"><use href="#wrench"/></svg></button></div><div class="tile-body"><svg width="120" height="60" viewBox="0 0 120 60"><path d="M0 60a60 60 0 01120 0H99a39 39 0 00-78 0z" fill="#efefef"/><path d="M0 57l21 1v1H0z" fill="#78aef5"/><text x="60" y="55" text-anchor="middle" style="font-size:15px">1,85 %</text></svg></div></article>
      <article class="tile"><div class="tile-head"><span>Moy ordres exec/jour</span><button aria-label="Régler Moy ordres"><svg width="10" height="10"><use href="#wrench"/></svg></button></div>
        <div class="tile-body pt-2"><svg width="118" height="118" viewBox="-59 -59 118 118">
          <defs><radialGradient id="ring"><stop offset=".78" stop-color="#5ab4e6"/><stop offset="1" stop-color="#2478bc"/></radialGradient><linearGradient id="down" y2="1" x2="0"><stop stop-color="#c82828"/><stop offset="1" stop-color="#ff6a6a"/></linearGradient><linearGradient id="up" y2="1" x2="0"><stop stop-color="#18d018"/><stop offset="1" stop-color="#068406"/></linearGradient></defs>
          <circle r="58" fill="url(#ring)"/><circle r="46" fill="#fff" stroke="#1c78b8"/>
          <path d="M-31-18A36 36 0 0131-18L5-3H-5z" fill="#d9dfe2"/><path d="M-35-21A41 41 0 0135-22" fill="none" stroke="#93a1a8" stroke-width="3"/><path d="M29-24l10 0-2 7z" fill="#93a1a8"/>
          <text y="-15" text-anchor="middle" fill="#93a1a8" style="font-size:21px;font-style:italic;font-weight:700">24</text>
          <path d="M-22-13L0 0 31-18" fill="none" stroke="#fff" stroke-width="7"/><path d="M-22-13L0 0 31-18" fill="none" stroke="#82939b" stroke-width="4"/><circle r="5" fill="#fff" stroke="#82939b" stroke-width="3"/><circle cx="-41" r="2" fill="#93a1a8"/><circle cx="41" r="2" fill="#93a1a8"/>
          <rect x="-42" y="9.500" width="86" height="38" rx="2" fill="#fff" stroke="#aaa"/>
          <path d="M-16 8C-30 1-44 8-45 29h-10l13 17 13-18h-9c0-10 8-19 22-20z" fill="url(#down)"/><path d="M17 48c14 7 28 0 29-19h10L43 12 30 29h9c0 11-8 18-22 19z" fill="url(#up)"/>
          <text y="36" text-anchor="middle" fill="#009900" style="font-size:23px">0,28</text>
        </svg></div></article>
    </div>
  </section>
</main>

<script src="https://cdn.jsdelivr.net/npm/bootstrap@5.3.0/dist/js/bootstrap.bundle.min.js"></script>
<script>
const pairs = s => s.trim().split(/\s+/).map(p => p.split(',').map(Number));
const text = (x, y, s, o = '') => `<text x="${x}" y="${y}" ${o}>${s}</text>`;
const fmt = v => v.toLocaleString('fr-FR').replace(/\s/g, ' ');

// Equity curve, on a 896 x 269 grid
const equity = pairs(`2,242 2,249 16,249 17,252 21,257 32,257 34,248 38,249 44,251 54,251 55,246 59,249 78,249 81,253 86,249 91,252 101,253 102,247 109,247 109,239 112,240 119,239 120,232 120,243 124,244 142,244 149,243 149,237 153,235 157,236 163,235 186,235 189,228 195,229 196,220 207,220 209,227 211,218 215,216 220,217 221,203 229,203 230,198 238,198 239,195 245,195 246,190 258,190 259,194 277,194 279,200 280,193 282,196 295,196 296,201 305,201 307,199 313,199 315,203 319,205 324,203 326,192 330,192 333,199 335,195 336,206 339,219 361,219 363,218 372,218 372,205 380,205 382,202 388,202 389,205 397,206 400,210 402,202 414,204 423,204 423,196 429,196 432,187 435,186 436,177 439,175 441,180 449,180 452,173 468,173 469,175 479,175 480,169 489,169 490,167 516,167 519,171 529,175 532,182 534,181 535,186 550,187 551,177 562,176 564,178 577,178 578,176 579,180 584,180 584,185 585,172 593,169 594,160 596,158 606,158 607,157 621,157 622,161 628,161 631,151 645,151 648,157 657,157 657,151 674,151 675,147 684,147 685,153 700,153 702,155 707,155 713,153 714,145 715,161 716,147 731,147 737,143 740,145 741,133 742,125 751,124 752,128 757,128 758,120 761,125 761,109 766,109 767,115 783,115 784,113 793,113 794,117 798,117 799,104 805,104 806,108 810,108 811,124 812,61 814,61 815,29 818,34 818,23 825,23 841,24 842,27 844,27`);
// Price path, on a 896 x 539 grid
const price = pairs(`1,455 3,430 6,438 10,429 13,445 15,462 16,442 19,425 22,418 26,425 28,412 30,425 32,438 34,405 37,382 39,375 42,398 44,375 46,377 49,363 52,365 56,348 59,355 62,353 67,328 68,358 72,358 74,342 79,332 82,335 85,340 88,368 91,348 96,328 98,342 100,328 103,348 106,325 111,325 113,328 117,313 120,328 122,314 129,314 131,325 134,335 137,355 139,328 143,355 147,328 148,338 152,308 157,300 162,285 164,293 166,292 171,303 173,325 175,345 178,298 181,297 184,325 187,288 192,275 194,295 196,288 199,308 201,335 202,368 204,348 206,315 208,325 211,305 214,328 216,345 218,392 220,355 223,352 225,392 228,372 230,338 232,335 236,318 238,325 240,335 243,342 247,318 249,365 252,382 255,375 256,402 258,412 261,392 262,435 265,402 267,372 272,375 274,422 277,468 280,452 282,418 285,442 288,425 290,438 292,452 293,415 298,408 301,382 304,385 309,348 312,368 315,382 316,405 319,422 323,392 324,428 327,442 330,482 332,498 335,452 337,485 339,495 341,455 343,442 346,408 348,382 351,408 355,358 357,368 361,348 363,358 366,338 368,355 372,328 373,375 376,385 379,375 382,378 386,345 390,378 392,358 396,348 398,358 402,345 406,365 410,388 413,368 416,415 418,422 422,392 424,405 427,372 431,358 434,348 440,355 442,348 445,372 448,365 452,363 455,385 459,385 461,358 463,355 467,338 470,358 475,338 478,358 482,335 485,315 488,308 492,308 494,318 496,312 501,335 504,342 507,322 511,338 515,327 518,345 521,355 524,378 526,385 528,358 531,352 534,375 538,395 540,372 541,347 544,350 547,325 551,315 553,312 556,292 559,293 562,268 565,255 570,247 573,258 576,248 579,262 581,242 586,230 591,218 593,235 596,225 598,210 601,215 605,225 608,212 610,222 613,194 615,202 616,192 619,208 622,225 624,238 626,255 628,228 632,242 635,218 639,198 642,185 645,208 648,237 650,222 653,215 656,228 661,202 664,212 668,203 672,178 674,152 675,175 678,185 681,158 682,202 683,225 685,222 688,195 690,168 693,162 697,145 700,168 701,183 703,158 706,142 709,125 712,122 716,132 718,115 720,104 723,95 726,115 730,135 732,108 735,70 736,82 739,102 741,75 742,54 746,52 748,53 751,68 754,88 755,125 758,95 761,112 764,110 766,132 768,95 771,75 774,58 776,53 777,78 779,53 781,68 783,58 786,64 788,92 790,82 792,95 795,128 798,165 799,148 802,135 805,112 807,132 808,145 810,205 811,268 812,188 813,162 816,172 817,245 818,188 821,198 822,175 825,152 828,125 832,112 834,148 837,122 840,132 843,110`);
// Closed trades: x, y, number of positions
const trades = [[0,464,2],[15,465,8],[35,453,6],[53,368,8],[82,357,16],[101,340,12],[114,333,8],[142,353,4],[156,328,10],[186,314,8],[198,325,''],[211,374,10],[231,353,4],[249,420,4],[277,474,6],[297,427,4],[315,437,6],[329,503,10],[363,362,6],[383,388,12],[399,374,8],[415,416,4],[443,381,16],[466,351,2],[482,367,4],[515,361,8],[526,386,8],[541,393,5],[554,332,13],[585,258,8],[597,244,6],[623,257,6],[639,239,10],[659,242,6],[676,218,4],[698,176,2],[711,143,10],[731,146,6],[743,109,8],[759,133,6],[786,123,6],[802,271,8],[816,254,12],[838,128,4]];

function scale(svg, w, h) {
  const W = svg.clientWidth, H = svg.clientHeight;
  return { W, H, X: v => Math.round(v * W / w), Y: v => Math.round(v * H / h) };
}

function drawEquity() {
  const svg = document.getElementById('equity'), { H, W, X, Y } = scale(svg, 896, 269);
  const zero = Y(244), ax = X(845);
  const pts = equity.map(([x, y]) => [X(x), Y(y)]);
  const area = `M${pts[0][0]} ${zero}L${pts.map(p => p.join(' ')).join('L')}L${pts.at(-1)[0]} ${zero}z`;
  let up = '', down = '', rising = false;
  for (let i = 1; i < pts.length; i++) {
    const [a, b] = [pts[i - 1], pts[i]];
    if (b[1] !== a[1]) rising = b[1] < a[1];
    const seg = `M${a[0] + .5} ${a[1] + .5}L${b[0] + .5} ${b[1] + .5}`;
    if (rising) up += seg; else down += seg;
  }
  let s = `<defs><linearGradient id="gu" gradientUnits="userSpaceOnUse" x1="0" y1="${Y(22)}" x2="0" y2="${zero}"><stop stop-color="#c0d7ff"/><stop offset="1" stop-color="#f6faff"/></linearGradient><linearGradient id="gd" gradientUnits="userSpaceOnUse" x1="0" y1="${zero}" x2="0" y2="${Y(257)}"><stop stop-color="#fff4e4"/><stop offset="1" stop-color="#fdd096"/></linearGradient>
    <clipPath id="ca"><path d="M0 0h${W}v${zero}H0z"/></clipPath><clipPath id="cb"><path d="M0 ${zero}h${W}v${H}H0z"/></clipPath></defs>
    <path d="${area}" fill="url(#gu)" clip-path="url(#ca)"/><path d="${area}" fill="url(#gd)" clip-path="url(#cb)"/>
    <path d="${up}" stroke="#86aef8" stroke-linecap="square" fill="none"/><path d="${down}" stroke="#f8bc6c" stroke-linecap="square" fill="none"/>
    <path d="M0 ${zero + .5}H${ax}" stroke="#1e1ec0"/><path d="M.5 ${Y(16)}V${H}" stroke="#0a8a0a"/><path d="M${ax + .5} 0V${H}" stroke="#b2b2b2"/>`;
  for (let v = 9900; v <= 11200; v += 100) {
    const y = Math.round(Y(244 - (v - 10000) * .2008)), major = v % 200 === 0, big = v % 1000 === 0;
    s += `<path d="M${ax} ${y + .5}h${major ? 5 : 3}" stroke="#b2b2b2"/>`;
    if (major) s += text(ax + 7, Math.max(y + 4, 9), fmt(v), big ? 'style="font-weight:700;font-size:12px"' : '');
  }
  s += `<path d="M${ax} ${Y(27) + .5}h5" stroke="#86aef8"/><path d="M${ax + 5.500} ${Y(20) + .5}h36v14h-36z" fill="#f4f4f4" stroke="#b2b2b2"/>` + text(ax + 7, Y(27) + 4, '11 081', 'fill="#6f9cf5"');
  svg.innerHTML = s;
}

function drawPrice() {
  const svg = document.getElementById('price'), { H, W, X, Y } = scale(svg, 896, 539);
  const ax = X(845), base = H - 17;
  let s = '', labels = '';
  for (const [x, y, n] of trades) {
    const a = X(x), b = Y(y);
    s += `<path d="M${a - 1.500} ${b - 5}h3v5h2l-3.500 4-3.500-4h2z" fill="#f5a030" stroke="#d08418"/><path d="M${a + 4.500} ${b + 2}h3v-5h2l-3.500-4-3.500 4h2z" fill="#5f96f5" stroke="#4a80e0"/>`;
    if (n) labels += text(a + 3, b + 13, n, 'text-anchor="middle" fill="#333" style="font-size:8px"');
  }
  // deterministic spread around the path gives each bar its high and low
  let seed = 7, k = 0, prev = price[0][1], green = '', red = '';
  const rnd = () => (seed = (seed * 16807) % 2147483647) / 2147483647;
  for (let x = 1; x <= 843; x++) {
    while (k < price.length - 2 && price[k + 1][0] < x) k++;
    const [a, b] = [price[k], price[k + 1]];
    const t = Math.min(1, Math.max(0, (x - a[0]) / (b[0] - a[0])));
    const y = a[1] + (b[1] - a[1]) * t;
    const spread = 5 + rnd() * 7, drift = (rnd() - .5) * 9;
    const hi = Math.min(prev, y) - spread * rnd() + drift / 2, lo = Math.max(prev, y) + spread * rnd() + drift / 2;
    const bar = `M${X(x) + .5} ${Y(hi)}V${Y(lo) + 2}`;
    if (y - prev + drift / 3 < 0) green += bar; else red += bar;
    prev = y;
  }
  s += `<path d="${green}" stroke="#2cf500"/><path d="${red}" stroke="#f00"/>` + labels;
  s += `<path d="M${ax + .5} 0V${base}M0 ${base + .5}H${ax}" stroke="#b2b2b2" fill="none"/>`;
  for (let v = 28000; v <= 46000; v += 2000) {
    const y = Y(19 + (46000 - v) * .027625);
    s += `<path d="M${ax} ${y + .5}h5" stroke="#b2b2b2"/>` + text(ax + 7, Math.min(y + 3, base - 1), fmt(v), v % 10000 ? '' : 'style="font-weight:700;font-size:12px"');
  }
  s += `<path d="M${ax} ${Y(108) + .5}h5" stroke="#000"/><path d="M${ax + 5.500} ${Y(101) + .5}h44v14h-44z" fill="#ffd21c" stroke="#b2b2b2"/>` + text(ax + 7, Y(108) + 4, '42 782,3');
  const months = ['avr.', 'juil.', 'oct.', '2022', 'avr.', 'juil.', 'oct.', '2023', 'avr.', 'juil.', 'oct.', '2024', 'avr.', 'juil.', 'oct.', '2025', 'avr.'];
  months.forEach((m, i) => {
    const x = X(47.500 + i * 47.500);
    s += `<path d="M${x + .5} ${base}v4" stroke="#b2b2b2"/>` + text(x, base + 14, m, 'text-anchor="middle"' + (m[0] === '2' ? ' style="font-weight:700;font-size:12px"' : ''));
  });
  s += text(2, base - 2, 'IT-Finance.com - Temps Réel');
  svg.innerHTML = s;
}

function drawPerf() {
  const svg = document.getElementById('perf'), { H, W, X, Y } = scale(svg, 545, 426);
  const right = X(490), base = Y(409), zero = Y(376), val = v => Y(376 - v * .734);
  let s = '';
  for (let v = 0; v <= 500; v += 50) {
    const y = val(v);
    s += `<path d="M0 ${y + .5}H${right}" stroke="#e4e4e4"/><path d="M${right} ${y + .5}h4" stroke="#b2b2b2"/>` + text(right + 7, y + 4, v, v % 500 ? '' : 'style="font-weight:700;font-size:12px"');
  }
  [[2021, 73.600], [2022, 111.700], [2023, 141.700], [2024, 290], [2025, 465.080]].forEach(([yr, v], i) => {
    const x = X(81 + i * 82);
    s += `<path d="M${x + .5} 0V${base}" stroke="#e0e0e0"/><path d="M${x + .5} ${base}v4" stroke="#b2b2b2"/><path d="M${x - 19.500} ${val(v) + .5}h39V${zero + .5}h-39z" fill="#3cd43c" stroke="#0a960a"/>` + text(x, base + 15, yr, 'text-anchor="middle"');
  });
  s += `<path d="M0 ${zero + .5}H${right}" stroke="#2020c8"/><path d="M.5 .5H${right + .5}V${base + .5}H.5z" fill="none" stroke="#b2b2b2"/>
    <path d="M.5 .5h50v14H.5z" fill="#f7f7f7" stroke="#b2b2b2"/>` + text(6, 11, 'Gains: €', 'font-weight="700"') + text(2, base - 3, 'IT-Finance.com') +
    `<path d="M${right + 4.500} ${Y(26) + .5}h37v15h-37z" fill="#ffd21c" stroke="#b2b2b2"/>` + text(right + 6, Y(26) + 12, '465,08');
  svg.innerHTML = s;
}

// Two-part rings: the green share starts at twelve o'clock
document.querySelectorAll('.donut').forEach(el => {
  const c = 2 * Math.PI * 34, part = el.dataset.share * c;
  const end = el.dataset.share * 2 * Math.PI, ex = Math.sin(end), ey = -Math.cos(end);
  el.innerHTML = `<circle r="34" fill="none" stroke="#e64646" stroke-width="14"/><circle r="34" fill="none" stroke="#3cd43c" stroke-width="14" stroke-dasharray="${part} ${c}" transform="rotate(-90)"/>
    <path d="M0-26V-42M${26 * ex} ${26 * ey}L${42 * ex} ${42 * ey}" stroke="#f7f7f7" stroke-width="2"/>` + text(0, 6, el.dataset.label, 'text-anchor="middle" fill="#009900" style="font-size:16px"');
});

const draw = () => { drawEquity(); drawPrice(); drawPerf(); };
draw();
addEventListener('resize', draw);
</script>
</body>
</html>
